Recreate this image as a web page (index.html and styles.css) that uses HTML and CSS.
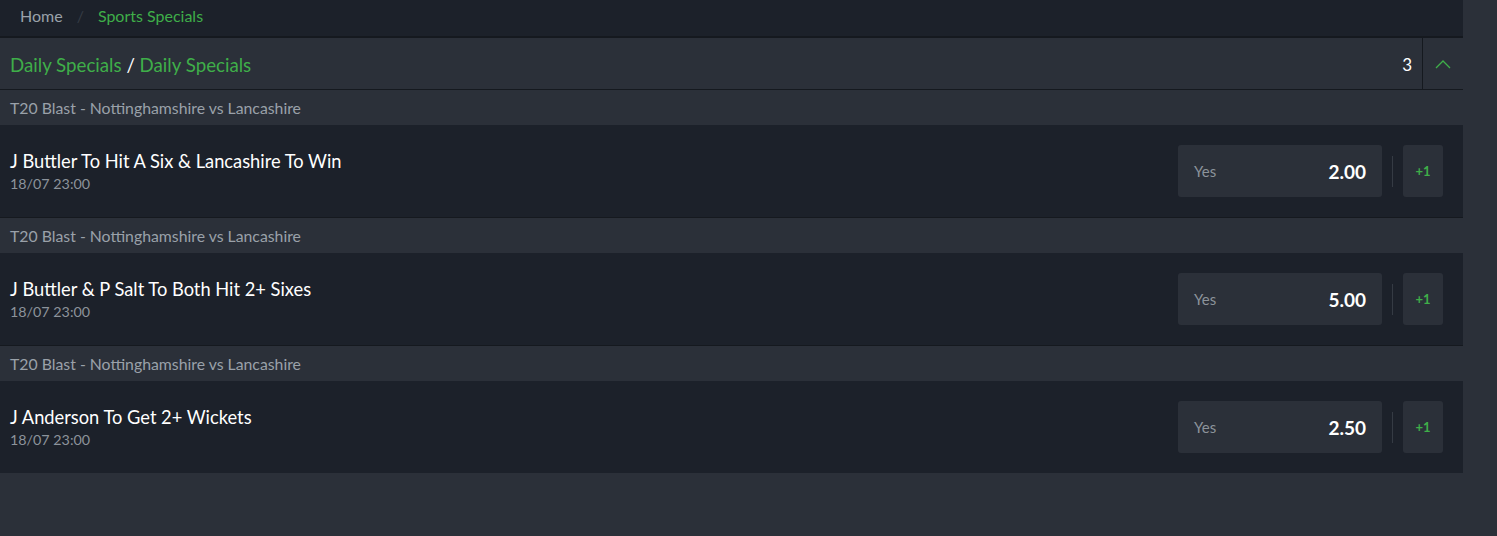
FILE: index.html
```html
<!DOCTYPE html>
<html lang="en">
<head>
  <meta charset="UTF-8" />
  <meta name="viewport" content="width=device-width, initial-scale=1.0"/>
  <title>Sports Specials</title>
  <link rel="stylesheet" href="styles.css">
</head>
<body>
	<div class="page">
		<div class="crumbs">
			<a class="crumb" href="#">Home</a>
			<span class="crumb-sep">/</span>
			<a class="crumb active" href="#">Sports Specials</a>
		</div>

		<div class="market-head">
			<div class="market-title">
				<span class="green">Daily Specials</span> / <span class="green">Daily Specials</span>
			</div>
			<div class="market-count">3</div>
			<div class="market-toggle">
				<svg width="16" height="10" viewBox="0 0 16 10"><path d="M1 9 L8 2 L15 9" fill="none" stroke="#3fae49" stroke-width="1.3"/></svg>
			</div>
		</div>

		<div class="event-name">T20 Blast - Nottinghamshire vs Lancashire</div>
		<div class="bet-row">
			<div class="bet-info">
				<div class="bet-title">J Buttler To Hit A Six &amp; Lancashire To Win</div>
				<div class="bet-date">18/07 23:00</div>
			</div>
			<div class="odds">
				<span class="odds-label">Yes</span>
				<span class="odds-price">2.00</span>
			</div>
			<div class="divider"></div>
			<div class="more">+1</div>
		</div>

		<div class="event-name">T20 Blast - Nottinghamshire vs Lancashire</div>
		<div class="bet-row">
			<div class="bet-info">
				<div class="bet-title">J Buttler &amp; P Salt To Both Hit 2+ Sixes</div>
				<div class="bet-date">18/07 23:00</div>
			</div>
			<div class="odds">
				<span class="odds-label">Yes</span>
				<span class="odds-price">5.00</span>
			</div>
			<div class="divider"></div>
			<div class="more">+1</div>
		</div>

		<div class="event-name">T20 Blast - Nottinghamshire vs Lancashire</div>
		<div class="bet-row last">
			<div class="bet-info">
				<div class="bet-title">J Anderson To Get 2+ Wickets</div>
				<div class="bet-date">18/07 23:00</div>
			</div>
			<div class="odds">
				<span class="odds-label">Yes</span>
				<span class="odds-price">2.50</span>
			</div>
			<div class="divider"></div>
			<div class="more">+1</div>
		</div>
	</div>
</body>
</html>
```

FILE: styles.css
```css
body {
  margin: 0;
  font-family: Lato, "Noto Sans", sans-serif;
  background: #2b3039;
  color: #fff;
}

.page {
  width: 1463px;
}

.crumbs {
  display: flex;
  align-items: center;
  height: 38px;
  padding: 0 0 5px 20px;
  box-sizing: border-box;
  background: #1c212a;
  border-bottom: 2px solid #15191f;
  font-size: 16px;
}

.crumb {
  color: #9aa1a9;
  text-decoration: none;
}

.crumb.active {
  color: #3fae49;
}

.crumb-sep {
  color: #353b44;
  margin: 0 14px 0 14px;
}

.market-head {
  display: flex;
  align-items: center;
  height: 52px;
  box-sizing: border-box;
  background: #2b3039;
  border-bottom: 1px solid #15191f;
}

.market-title {
  flex: 1;
  padding: 2px 0 0 10px;
  font-size: 18.7px;
  color: #fff;
}

.green {
  color: #3fae49;
}

.market-count {
  font-size: 17px;
  padding: 2px 10px 0 0;
}

.market-toggle {
  width: 40px;
  height: 100%;
  display: flex;
  align-items: center;
  justify-content: center;
  border-left: 1px solid #15191f;
}

.event-name {
  height: 35px;
  display: flex;
  align-items: center;
  padding-left: 10px;
  background: #2b3039;
  color: #9aa1a9;
  font-size: 15.8px;
}

.bet-row {
  display: flex;
  align-items: center;
  height: 93px;
  box-sizing: border-box;
  padding-right: 20px;
  background: #1c212a;
  border-bottom: 1px solid #15191f;
}

.bet-row.last {
  height: 92px;
  border-bottom: none;
}

.bet-info {
  flex: 1;
  padding-left: 10px;
}

.bet-title {
  font-size: 18.3px;
  color: #fff;
  margin-bottom: 3px;
}

.bet-date {
  font-size: 14.3px;
  color: #8c939b;
}

.odds {
  display: flex;
  align-items: center;
  justify-content: space-between;
  width: 204px;
  height: 52px;
  box-sizing: border-box;
  padding: 0 16px;
  background: #2b3039;
  border-radius: 3px;
}

.odds-label {
  color: #8c939b;
  font-size: 15px;
}

.odds-price {
  font-size: 19px;
  font-weight: bold;
}

.divider {
  width: 1px;
  height: 31px;
  background: #353b44;
  margin: 0 10px;
}

.more {
  width: 40px;
  height: 52px;
  display: flex;
  align-items: center;
  justify-content: center;
  background: #2b3039;
  border-radius: 3px;
  color: #3fae49;
  font-size: 13px;
  font-weight: bold;
}
```
